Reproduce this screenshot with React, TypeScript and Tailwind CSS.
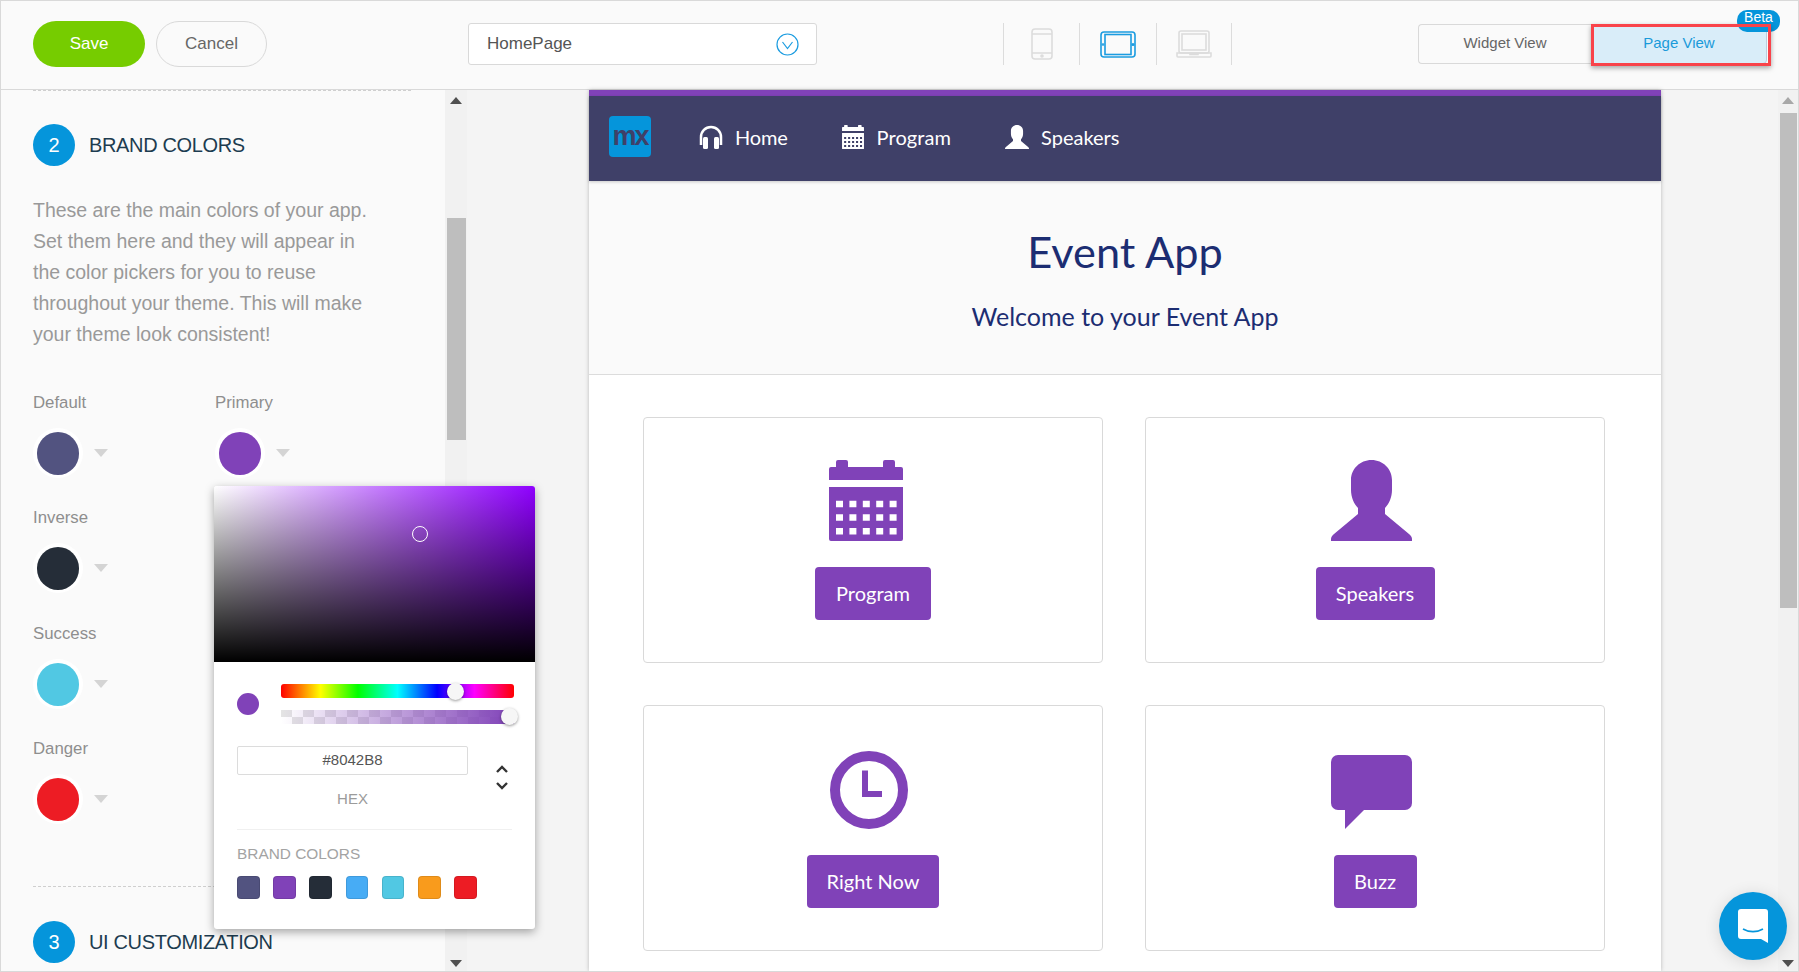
import type { ReactNode } from "react";

const SANS = "font-['Liberation_Sans',Arial,sans-serif]";
const LATO = "font-['Lato',sans-serif]";

function Swatch({ color, label, mt }: { color: string; label: string; mt: string }) {
  return (
    <div className={mt}>
      <div className="text-[16.8px] leading-[20px] text-[#8e8e8e]">{label}</div>
      <div className="mt-[15px] flex items-center">
        <span className="flex h-[50px] w-[50px] items-center justify-center rounded-full bg-white">
          <span className={`h-[43px] w-[42px] rounded-full ${color}`} />
        </span>
        <span className="ml-[11px] h-0 w-0 border-x-[7px] border-t-[8px] border-x-transparent border-t-[#d4d4d4]" />
      </div>
    </div>
  );
}

function StepTitle({ n, title, className }: { n: string; title: string; className: string }) {
  return (
    <div className={`flex items-center ${className}`}>
      <span className="flex h-[42px] w-[42px] items-center justify-center rounded-full bg-[#0595db] text-[20px] text-white">{n}</span>
      <span className="ml-[14px] text-[20px] tracking-[-0.35px] text-[#1d3c50]">{title}</span>
    </div>
  );
}

function ScrollArrow({ up, className }: { up?: boolean; className: string }) {
  return (
    <span
      className={`h-0 w-0 border-x-[6px] border-x-transparent ${up ? "border-b-[7px] border-b-[#505050]" : "border-t-[7px] border-t-[#505050]"} ${className}`}
    />
  );
}

function Card({ icon, label, btn, iconClass }: { icon: ReactNode; label: string; btn: string; iconClass: string }) {
  return (
    <div className="flex h-[246px] flex-col items-center rounded-[4px] border border-[#d9d9d9] bg-white">
      <div className={`flex h-[149px] items-end pb-[26px] ${iconClass}`}>{icon}</div>
      <button className={`h-[53px] rounded-[4px] bg-[#8042b8] pb-[2px] text-[20px] text-white ${btn}`}>{label}</button>
    </div>
  );
}

function ColorPopover() {
  const brand = ["bg-[#525380]", "bg-[#8042b8]", "bg-[#252d38]", "bg-[#47acf5]", "bg-[#51c8e3]", "bg-[#f99b1c]", "bg-[#ed1c24]"];
  return (
    <div className={`absolute left-[213px] top-[485px] h-[443px] w-[321px] rounded-[3px] bg-white shadow-[0_3px_10px_rgba(0,0,0,0.35)] ${SANS}`}>
      <div className="relative h-[176px] rounded-t-[3px] bg-[linear-gradient(to_bottom,transparent,#000),linear-gradient(to_right,#fff,#8f00ff)]">
        <span className="absolute left-[198px] top-[40px] h-[16px] w-[16px] rounded-full border border-white" />
      </div>
      <div className="flex pl-[23px] pr-[21px] pt-[22px]">
        <span className="mt-[9px] h-[22px] w-[22px] rounded-full bg-[#8042b8]" />
        <div className="ml-[22px] flex-1">
          <div className="relative h-[14px] rounded-[3px] bg-[linear-gradient(to_right,#f00,#ff0_17%,#0f0_33%,#0ff_50%,#00f_67%,#f0f_83%,#f00)]">
            <span className="absolute left-[166px] top-[-1px] h-[17px] w-[17px] rounded-full bg-[#f6f6f6] shadow-[0_1px_3px_rgba(0,0,0,0.4)]" />
          </div>
          <div className="relative mt-[12px] h-[14px] bg-[linear-gradient(to_right,rgba(128,66,184,0),#8042b8),repeating-conic-gradient(#fff_0_25%,#e4e4e4_0_50%)] bg-[length:100%_100%,22px_14px]">
            <span className="absolute left-[220px] top-[-2px] h-[17px] w-[17px] rounded-full bg-[#f6f6f6] shadow-[0_1px_3px_rgba(0,0,0,0.4)]" />
          </div>
        </div>
      </div>
      <div className="flex pl-[23px] pt-[22px]">
        <div className="w-[231px]">
          <div className="flex h-[29px] items-center justify-center rounded-[2px] border border-[#dcdcdc] text-[15px] text-[#555]">#8042B8</div>
          <div className="mt-[14px] text-center text-[15px] leading-[20px] text-[#9b9b9b]">HEX</div>
        </div>
        <svg className="ml-[27px] mt-[19px]" width="14" height="26" viewBox="0 0 14 26" fill="none" stroke="#333" strokeWidth="2.4">
          <path d="M2 7l5-5 5 5M2 18l5 5 5-5" />
        </svg>
      </div>
      <div className="mx-[23px] mt-[20px] border-t border-[#f0f0f0]" />
      <div className="pl-[23px] pt-[15px] text-[15.4px] leading-[18px] text-[#a3a3a3]">BRAND COLORS</div>
      <div className="flex gap-[13.6px] pl-[23px] pt-[13px]">
        {brand.map((c) => (
          <span key={c} className={`h-[23px] w-[22.6px] rounded-[4px] border border-black/10 ${c}`} />
        ))}
      </div>
    </div>
  );
}

export default function App() {
  return (
    <div className={`relative flex h-[972px] w-[1799px] flex-col overflow-hidden border border-[#d9d9d9] bg-[#f4f4f4] ${SANS}`}>
      {/* top bar */}
      <header className="flex h-[89px] shrink-0 items-center border-b border-[#d9d9d9] bg-[#fafafa] pb-[2px] pl-[32px]">
        <button className="h-[46px] w-[112px] rounded-full bg-[#76cc00] text-[17px] text-white">Save</button>
        <button className="ml-[11px] h-[46px] w-[111px] rounded-full border border-[#d9d9d9] text-[17px] text-[#666]">Cancel</button>
        <div className="ml-[201px] flex h-[42px] w-[349px] items-center justify-between rounded-[3px] border border-[#d9d9d9] bg-white pl-[18px] pr-[17px] text-[17px] text-[#555]">
          HomePage
          <svg width="23" height="23" viewBox="0 0 23 23" fill="none" stroke="#1b9ce0" strokeWidth="1.2">
            <circle cx="11.5" cy="11.5" r="10.5" />
            <path d="M6.5 9l5 6.5 5-6.5" />
          </svg>
        </div>
        <div className="ml-[186px] flex h-[42px]">
          <div className="flex w-[76px] items-center justify-center border-l border-[#dcdcdc]">
            <svg width="22" height="32" viewBox="0 0 22 32" fill="none" stroke="#dcdcdc" strokeWidth="1.6">
              <rect x="1" y="1" width="20" height="30" rx="3" />
              <path d="M1 6h20M1 25h20" />
              <circle cx="11" cy="28" r="1" />
            </svg>
          </div>
          <div className="flex w-[77px] items-center justify-center border-l border-[#dcdcdc]">
            <svg width="36" height="27" viewBox="0 0 36 27" fill="none" stroke="#1b9ce0" strokeWidth="1.6">
              <rect x="1" y="1" width="34" height="25" rx="3" />
              <rect x="5" y="3.5" width="26" height="20" />
              <circle cx="33" cy="13.5" r="0.8" />
              <circle cx="3" cy="13.5" r="0.5" />
            </svg>
          </div>
          <div className="flex w-[76px] items-center justify-center border-x border-[#dcdcdc]">
            <svg width="36" height="28" viewBox="0 0 36 28" fill="none" stroke="#dcdcdc" strokeWidth="1.6">
              <rect x="3" y="1" width="30" height="22" rx="2" />
              <rect x="6" y="4" width="24" height="16" />
              <path d="M1 23h34v3a1 1 0 0 1-1 1H2a1 1 0 0 1-1-1zM14 23v1.5h8V23" />
            </svg>
          </div>
        </div>
        <div className="ml-[186px] flex h-[40px]">
          <div className="flex w-[173px] items-center justify-center rounded-l-[4px] border border-r-0 border-[#d9d9d9] pb-[1px] text-[15px] text-[#666]">Widget View</div>
          <div className="flex w-[176px] items-center justify-center rounded-r-[4px] border border-[#bcd] bg-[#d9edf9] pb-[1px] text-[15px] text-[#1a9ad9]">Page View</div>
        </div>
      </header>
      <span className="absolute left-[1736px] top-[9px] z-10 flex h-[22px] w-[43px] justify-center rounded-[10px] bg-[#0595db] text-[14px] leading-[15px] text-white">Beta</span>
      <span className="absolute left-[1590px] top-[23px] z-20 h-[42px] w-[180px] border-[3px] border-[#f9434a] shadow-[0_2px_5px_rgba(0,0,0,0.35)]" />

      <div className="flex min-h-0 flex-1">
        {/* theme settings */}
        <aside className="w-[444px] shrink-0 bg-[#fafafa] pl-[32px]">
          <div className="mb-[33px] w-[378px] border-t border-dashed border-[#cfcfcf]" />
          <StepTitle n="2" title="BRAND COLORS" className="" />
          <p className="mt-[29px] w-[350px] text-[19.5px] leading-[31px] text-[#999]">
            These are the main colors of your app. Set them here and they will appear in the color pickers for you to reuse throughout your theme. This will make your theme look consistent!
          </p>
          <div className="flex">
            <Swatch label="Default" color="bg-[#525380]" mt="mt-[43px]" />
            <div className="ml-[107px]">
              <Swatch label="Primary" color="bg-[#8042b8]" mt="mt-[43px]" />
            </div>
          </div>
          <Swatch label="Inverse" color="bg-[#252d38]" mt="mt-[30px]" />
          <Swatch label="Success" color="bg-[#51c8e3]" mt="mt-[31px]" />
          <Swatch label="Danger" color="bg-[#ed1c24]" mt="mt-[30px]" />
          <div className="mt-[62px] w-[378px] border-t border-dashed border-[#cfcfcf]" />
          <StepTitle n="3" title="UI CUSTOMIZATION" className="mt-[34px]" />
        </aside>
        <div className="relative flex w-[22px] shrink-0 flex-col items-center bg-[#f1f1f1] pt-[7px]">
          <ScrollArrow up className="" />
          <span className="mt-[114px] h-[222px] w-[19px] bg-[#bebebe]" />
          <ScrollArrow className="absolute bottom-[4px]" />
        </div>

        {/* page preview */}
        <main className={`ml-[122px] w-[1072px] shrink-0 bg-white shadow-[0_0_4px_rgba(0,0,0,0.25)] ${LATO}`}>
          <div className="h-[6px] bg-[#8042b8]" />
          <nav className="relative flex h-[85px] items-center bg-[#3f4068] pb-[4px] pl-[20px] text-[20px] text-white shadow-[0_1px_3px_rgba(0,0,0,0.2)]">
            <span className={`flex h-[41px] w-[42px] items-center justify-center rounded-[4px] bg-[#0595db] text-[27px] font-bold tracking-[-2px] text-[#3f4068] ${SANS}`}>mx</span>
            <svg className="ml-[47px]" width="26" height="24" viewBox="0 0 26 24" fill="none">
              <path d="M3 20v-8a10 10 0 0 1 20 0v8" stroke="#fff" strokeWidth="2.5" />
              <rect x="5" y="12" width="5" height="12" rx="1.5" fill="#fff" />
              <rect x="16" y="12" width="5" height="12" rx="1.5" fill="#fff" />
            </svg>
            <span className="ml-[11px] tracking-[-0.2px]">Home</span>
            <svg className="ml-[54px]" width="22" height="24" viewBox="0 0 74 81" fill="#fff">
              <CalendarShape />
            </svg>
            <span className="ml-[13px] tracking-[0.1px]">Program</span>
            <svg className="ml-[54px]" width="24" height="24" viewBox="0 0 81 81" fill="#fff">
              <PersonShape />
            </svg>
            <span className="ml-[12px]">Speakers</span>
          </nav>
          <div className="flex h-[194px] flex-col items-center border-b border-[#dcdcdc] bg-[#fafafa] pt-[43px] text-[#1c2d72]">
            <h1 className="text-[43.3px] leading-[54px]">Event App</h1>
            <p className="mt-[23px] text-[25px] leading-[30px]">Welcome to your Event App</p>
          </div>
          <div className="grid grid-cols-2 gap-x-[42px] gap-y-[42px] pl-[54px] pr-[56px] pt-[42px]">
            <Card
              label="Program"
              btn="w-[116px]"
              iconClass="mr-[14px]"
              icon={
                <svg width="74" height="81" viewBox="0 0 74 81" fill="#8042b8">
                  <CalendarShape />
                </svg>
              }
            />
            <Card
              label="Speakers"
              btn="w-[119px]"
              iconClass="mr-[7px]"
              icon={
                <svg width="81" height="81" viewBox="0 0 81 81" fill="#8042b8">
                  <PersonShape />
                </svg>
              }
            />
            <Card
              label="Right Now"
              btn="w-[132px]"
              iconClass="mr-[8px]"
              icon={
                <svg width="78" height="78" viewBox="0 0 78 78" fill="#8042b8">
                  <circle cx="39" cy="39" r="34" fill="none" stroke="#8042b8" strokeWidth="10" />
                  <path d="M32 19.5h6v20.5h14v6H32z" />
                </svg>
              }
            />
            <Card
              label="Buzz"
              btn="w-[83px]"
              iconClass="mr-[7px]"
              icon={
                <svg width="81" height="74" viewBox="0 0 81 74" fill="#8042b8">
                  <rect width="81" height="55" rx="7" />
                  <path d="M14 54h20L14 74z" />
                </svg>
              }
            />
          </div>
        </main>

        <div className="relative ml-auto flex w-[20px] shrink-0 flex-col items-center bg-[#f1f1f1] pt-[7px]">
          <span className="h-0 w-0 border-x-[6px] border-b-[7px] border-x-transparent border-b-[#a8a8a8]" />
          <span className="mt-[9px] h-[495px] w-[17px] bg-[#bebebe]" />
          <ScrollArrow className="absolute bottom-[4px]" />
        </div>
      </div>

      <ColorPopover />

      {/* chat launcher */}
      <div className="absolute left-[1718px] top-[891px] flex h-[68px] w-[68px] items-center justify-center rounded-full bg-[#0595db] shadow-[0_2px_16px_rgba(0,0,0,0.12)]">
        <svg width="32" height="36" viewBox="0 0 32 36">
          <path d="M4 1h24a3 3 0 0 1 3 3v31l-7-4H4a3 3 0 0 1-3-3V4a3 3 0 0 1 3-3z" fill="#fff" />
          <path d="M6 21c6 3.5 14 3.5 20 0" fill="none" stroke="#0595db" strokeWidth="1.6" />
        </svg>
      </div>
    </div>
  );
}

function CalendarShape() {
  const cells = [];
  for (let r = 0; r < 3; r++) {
    for (let c = 0; c < 5; c++) {
      cells.push(`M${7 + c * 13.4} ${40.7 + r * 13.6}h7v6.5h-7z`);
    }
  }
  return (
    <>
      <path d="M7 2a2 2 0 0 1 2-2h8a2 2 0 0 1 2 2v5h35V2a2 2 0 0 1 2-2h8a2 2 0 0 1 2 2v5h6a2 2 0 0 1 2 2v11H0V9a2 2 0 0 1 2-2h5z" />
      <path fillRule="evenodd" d={`M0 27h74v52a2 2 0 0 1-2 2H2a2 2 0 0 1-2-2z${cells.join("")}`} />
    </>
  );
}

function PersonShape() {
  return <path d="M40.5 0C52 0 61 9 61 20v10c0 7-3 14-7 18v6l24 20c2 2 3 3 3 5v2H0v-2c0-2 1-3 3-5l24-20v-6c-4-4-7-11-7-18V20C20 9 29 0 40.5 0z" />;
}
